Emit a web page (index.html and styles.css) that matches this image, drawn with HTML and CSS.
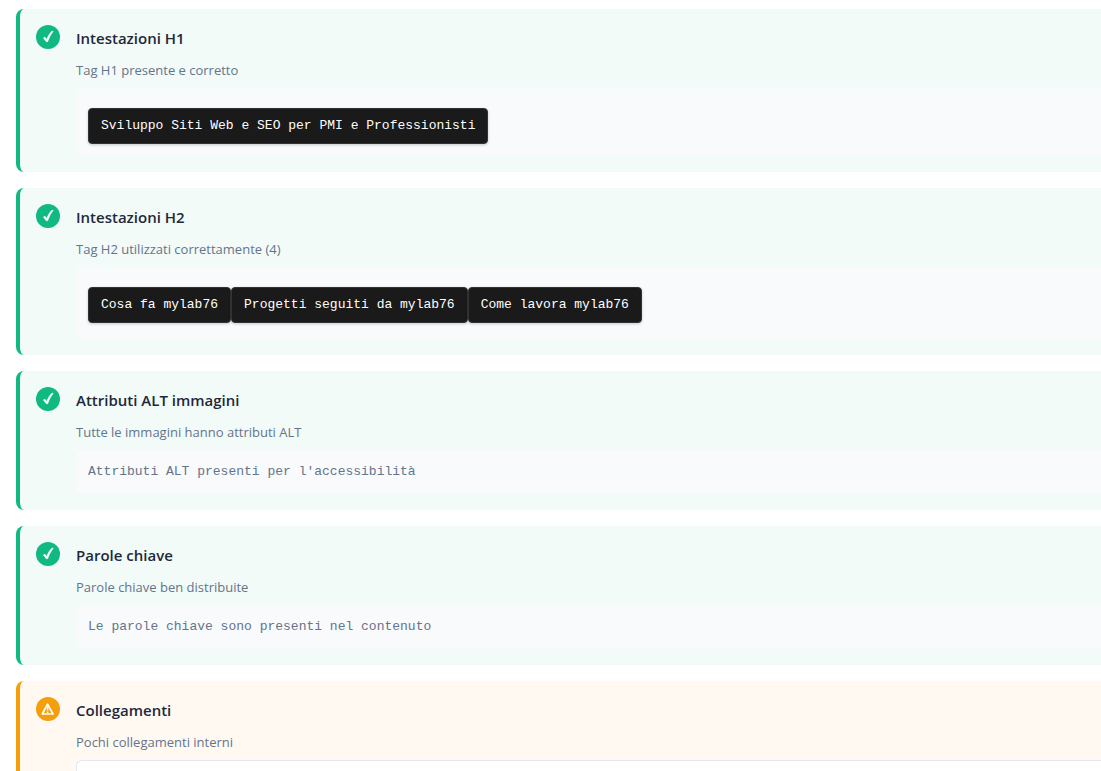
FILE: index.html
```
<!DOCTYPE html>
<html lang="it">
<head>
  <meta charset="UTF-8" />
  <meta name="viewport" content="width=device-width, initial-scale=1.0" />
  <title>Analisi SEO</title>
  <link rel="stylesheet" href="styles.css">
</head>
<body>

<main class="results">
  <section class="check success">
    <div class="check-icon">
      <svg viewBox="0 0 24 24"><path d="M7.4 13l1.5-.9 1.8 2.4c1.3-3.400 3-6.200 5.400-8.400l1.100.3c-2.300 2.900-4.200 6.300-5.500 10.300l-1.400.1z"/></svg>
    </div>
    <div class="check-content">
      <h3>Intestazioni H1</h3>
      <p>Tag H1 presente e corretto</p>
      <div class="details">
        <ul class="tags">
          <li>Sviluppo Siti Web e SEO per PMI e Professionisti</li>
        </ul>
      </div>
    </div>
  </section>

  <section class="check success">
    <div class="check-icon">
      <svg viewBox="0 0 24 24"><path d="M7.4 13l1.5-.9 1.8 2.4c1.3-3.400 3-6.200 5.400-8.400l1.100.3c-2.300 2.900-4.200 6.300-5.500 10.300l-1.400.1z"/></svg>
    </div>
    <div class="check-content">
      <h3>Intestazioni H2</h3>
      <p>Tag H2 utilizzati correttamente (4)</p>
      <div class="details">
        <ul class="tags tags-multi">
          <li>Cosa fa mylab76</li>
          <li>Progetti seguiti da mylab76</li>
          <li>Come lavora mylab76</li>
        </ul>
      </div>
    </div>
  </section>

  <section class="check success">
    <div class="check-icon">
      <svg viewBox="0 0 24 24"><path d="M7.4 13l1.5-.9 1.8 2.4c1.3-3.400 3-6.200 5.400-8.400l1.100.3c-2.300 2.900-4.200 6.300-5.500 10.300l-1.400.1z"/></svg>
    </div>
    <div class="check-content">
      <h3>Attributi ALT immagini</h3>
      <p>Tutte le immagini hanno attributi ALT</p>
      <div class="details">Attributi ALT presenti per l'accessibilità</div>
    </div>
  </section>

  <section class="check success">
    <div class="check-icon">
      <svg viewBox="0 0 24 24"><path d="M7.4 13l1.5-.9 1.8 2.4c1.3-3.400 3-6.200 5.400-8.400l1.100.3c-2.300 2.900-4.200 6.300-5.500 10.300l-1.400.1z"/></svg>
    </div>
    <div class="check-content">
      <h3>Parole chiave</h3>
      <p>Parole chiave ben distribuite</p>
      <div class="details">Le parole chiave sono presenti nel contenuto</div>
    </div>
  </section>

  <section class="check warning">
    <div class="check-icon">
      <svg viewBox="0 0 24 24"><path d="M11.500 7.200L6.300 17h10.700z" fill="none" stroke-width="1.700" stroke-linejoin="round"/><path d="M11.600 9.500v4M11.600 14.600v1.500" stroke-width="1.500"/></svg>
    </div>
    <div class="check-content">
      <h3>Collegamenti</h3>
      <p>Pochi collegamenti interni</p>
      <div class="details details-box"></div>
    </div>
  </section>
</main>

</body>
</html>
```

FILE: styles.css
```
* {
  margin: 0;
  padding: 0;
  box-sizing: border-box;
}

body {
  height: 100vh;
  overflow: hidden;
  background: #fff;
  color: #1e293b;
  font-family: "Segoe UI", "Open Sans", sans-serif;
}

.results {
  display: flex;
  flex-direction: column;
  gap: 16px;
  padding: 9px 0 0 16px;
}

.check {
  display: flex;
  gap: 16px;
  padding: 16px 0 16px 16px;
  border-left: 4px solid;
  border-radius: 8px 0 0 8px;
}

.success {
  background: #f2fbf8;
  border-color: #10b981;
}

.warning {
  background: #fff9f2;
  border-color: #f59e0b;
}

.check-icon {
  flex-shrink: 0;
  width: 24px;
  height: 24px;
  border-radius: 50%;
}

.check-icon svg {
  display: block;
  stroke: #fff;
}

.success .check-icon {
  background: #10b981;
}

.success .check-icon svg {
  fill: #fff;
  stroke-width: 0.5;
}

.warning .check-icon {
  background: #f59e0b;
}

.check-content {
  flex: 1;
}

h3 {
  margin-bottom: 8px;
  font-size: 15px;
  font-weight: 600;
  line-height: 26px;
}

p {
  margin-bottom: 6px;
  color: #64748b;
  font-size: 13px;
  line-height: 23px;
}

.details {
  padding: 12px;
  background: #f8fafc;
  border-radius: 6px 0 0 6px;
  color: #64748b;
  font-family: "Courier New", "Liberation Mono", monospace;
  font-size: 13px;
  line-height: 20px;
}

.details-box {
  background: #fff;
  border: 1px solid #e2e8f0;
  border-right: none;
}

.tags {
  display: flex;
  flex-wrap: wrap;
  padding-top: 8px;
  list-style: none;
}

.tags-multi {
  padding-bottom: 4px;
}

.tags li {
  padding: 8px 12px;
  background: #1a1a1a;
  border: 1px solid #333;
  border-radius: 4px;
  box-shadow: 0 1px 3px rgba(0, 0, 0, 0.2);
  color: #fff;
  line-height: 18px;
}
```
